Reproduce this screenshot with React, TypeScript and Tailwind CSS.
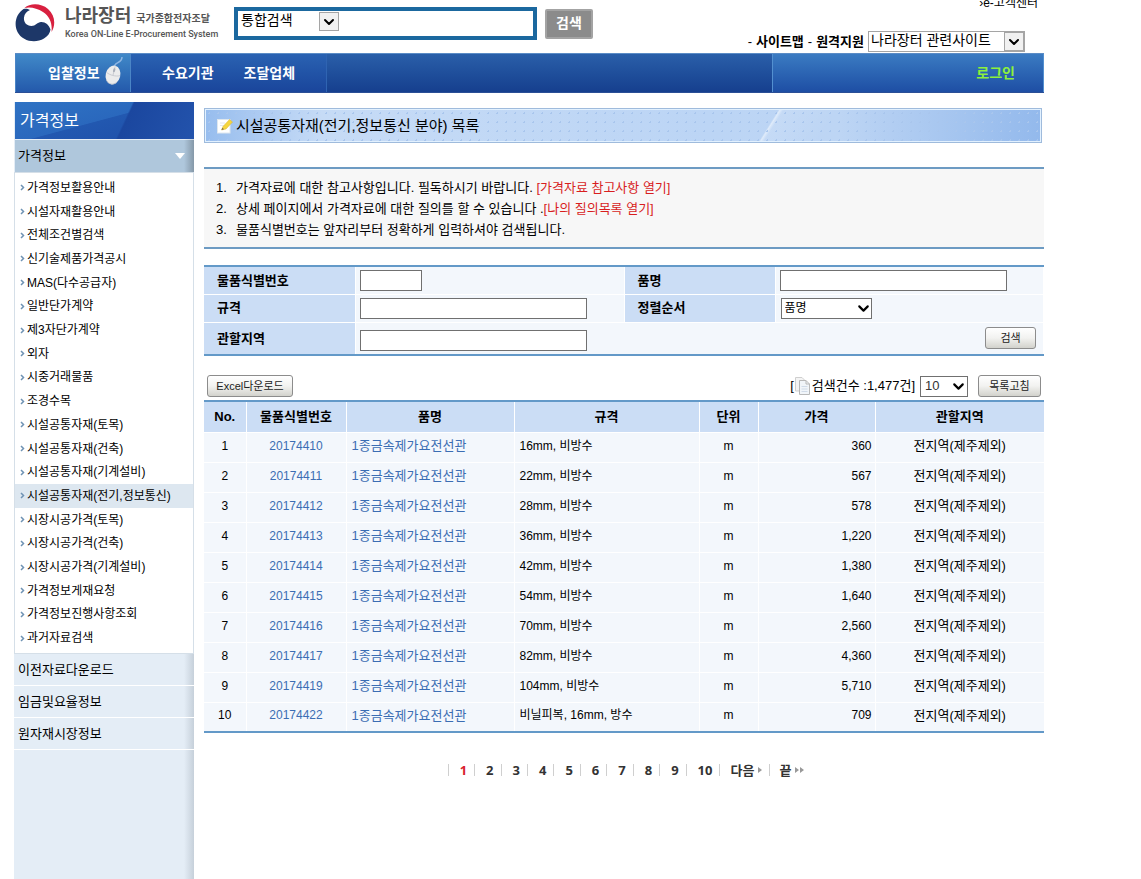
import React from "react";
import { ChevronDown } from "lucide-react";

const sideItems = [
  "가격정보활용안내",
  "시설자재활용안내",
  "전체조건별검색",
  "신기술제품가격공시",
  "MAS(다수공급자)",
  "일반단가계약",
  "제3자단가계약",
  "외자",
  "시중거래물품",
  "조경수목",
  "시설공통자재(토목)",
  "시설공통자재(건축)",
  "시설공통자재(기계설비)",
  "시설공통자재(전기,정보통신)",
  "시장시공가격(토목)",
  "시장시공가격(건축)",
  "시장시공가격(기계설비)",
  "가격정보게재요청",
  "가격정보진행사항조회",
  "과거자료검색",
];

const sideSections = ["이전자료다운로드", "임금및요율정보", "원자재시장정보"];

const rows = [
  ["20174410", "16mm, 비방수", "360"],
  ["20174411", "22mm, 비방수", "567"],
  ["20174412", "28mm, 비방수", "578"],
  ["20174413", "36mm, 비방수", "1,220"],
  ["20174414", "42mm, 비방수", "1,380"],
  ["20174415", "54mm, 비방수", "1,640"],
  ["20174416", "70mm, 비방수", "2,560"],
  ["20174417", "82mm, 비방수", "4,360"],
  ["20174419", "104mm, 비방수", "5,710"],
  ["20174422", "비닐피복, 16mm, 방수", "709"],
];

const pages = ["1", "2", "3", "4", "5", "6", "7", "8", "9", "10"];

function Logo() {
  return (
    <svg viewBox="0 0 40 38" className="h-[38px] w-10 shrink-0" aria-hidden="true">
      <path
        d="M9.5 4C15 -1 26 -1 33 5C40 11 41 21 36.5 28C37.500 20 35 12.500 28 8C22 4 15 2.500 9.500 4Z"
        fill="#d8203f"
      />
      <path
        d="M8.500 5C1 10 -1.500 20 2.500 28C7 37 20 40 29 34.500C33 32 35 29 35.500 25.500C34 21 30.500 17.800 26 18C22.500 18.200 20.500 22 16.500 22C11 22 8.500 18 9 13.500C9.400 10 11.500 7.500 15 6C12.500 4.500 10.500 4.500 8.500 5Z"
        fill="#1d3768"
      />
    </svg>
  );
}

function MouseIcon() {
  return (
    <svg viewBox="0 0 22 30" className="h-[30px] w-[22px]" aria-hidden="true">
      <path d="M12 11C10 6 19 8 19 1" fill="none" stroke="#8fb6e2" strokeWidth="1.500" />
      <g transform="rotate(14 10 19)">
        <ellipse cx="10" cy="19" rx="7.300" ry="9.500" fill="#ececec" />
        <path d="M4 24C7 29 13 29 16 24C15 30 5 30 4 24Z" fill="#b9bec8" />
        <path d="M3 18C7 20 13 20 17 18M10 10V19" fill="none" stroke="#c3c6cd" strokeWidth="0.800" />
        <rect x="9" y="12" width="2" height="4" rx="1" fill="#a9aeb9" />
      </g>
    </svg>
  );
}

function NoteIcon() {
  return (
    <svg viewBox="0 0 16 16" className="size-4 shrink-0" aria-hidden="true">
      <rect x="0.500" y="1.500" width="12.500" height="13.500" fill="#fff" stroke="#dfe7ee" />
      <path d="M3 5H8M3 7.500H7" stroke="#e3e8ee" />
      <path d="M4.500 12L6 8.500L12.500 1.500L15.500 4L9 11Z" fill="#f5d63e" stroke="#d8b030" strokeWidth="0.500" />
      <path d="M4.500 12L5.500 9.800L7 11.300Z" fill="#7a6a4a" />
    </svg>
  );
}

function PagesIcon() {
  return (
    <svg viewBox="0 0 16 18" className="h-[18px] w-4" aria-hidden="true">
      <path d="M0.500 0.500H7L10 3.500V14H0.500Z" fill="#f4f4f4" stroke="#cfcfcf" />
      <path d="M4.500 3.500H11L14.500 7V17.500H4.500Z" fill="#f1f5f9" stroke="#b8b8b8" />
      <path d="M11 3.500V7H14.500" fill="none" stroke="#b8b8b8" />
      <path d="M6.500 9.500H12.500M6.500 12H12.500M6.500 14.500H12.500" stroke="#d0dbe8" />
    </svg>
  );
}

function BoxArrow() {
  return (
    <span className="pointer-events-none absolute top-0 right-0 flex h-[19px] w-5 items-center justify-center border border-[#a5a5a5] bg-[#f1f1f1]">
      <ChevronDown size={16} strokeWidth={3} />
    </span>
  );
}

const smallButton =
  "rounded-[3px] border border-[#8c8c8c] bg-gradient-to-b from-white via-[#f2f2f0] to-[#d2d2cc] text-[11px] leading-[18px] text-[#222]";
const labelCell =
  "border-r border-b border-white bg-[#cbddf5] pl-[13px] text-left text-[13px] font-bold";
const fieldCell = "border-r border-b border-white bg-[#f3f7fc] pl-1";
const textInput = "block h-[21px] border border-[#707070] bg-white px-1 text-[12px]";

export default function App() {
  return (
    <div className="flex min-h-screen flex-col bg-white pl-[14px] font-['Liberation_Sans','Noto_Sans_CJK_KR',sans-serif] text-[13px] text-black">
      <div className="flex w-full max-w-[1030px] flex-1 flex-col">
        <header className="flex h-[53px] items-start pl-px">
          <a href="#" className="flex w-[202px] shrink-0 items-center pt-[4px]">
            <Logo />
            <span className="ml-[10px] flex flex-col text-[#555]">
              <span className="flex items-baseline gap-[5px] leading-[20px]">
                <span className="text-[18px] font-bold">나라장터</span>
                <span className="text-[10px] font-bold whitespace-nowrap">국가종합전자조달</span>
              </span>
              <span className="font-[Roboto,sans-serif] text-[9px] leading-[11px] font-medium whitespace-nowrap">
                Korea ON-Line E-Procurement System
              </span>
            </span>
          </a>
          <form className="ml-[17px] flex items-center pt-[7px]">
            <div className="flex h-[33px] w-[303px] items-start border-4 border-[#1b689f] bg-white pl-px">
              <div className="relative mt-px h-5 w-[100px]">
                <select
                  aria-label="검색 구분"
                  className="block h-5 w-full appearance-none bg-white pb-1 pl-[2px] text-[14px] leading-4"
                >
                  <option>통합검색</option>
                </select>
                <BoxArrow />
              </div>
              <input aria-label="검색어" className="h-[25px] min-w-0 flex-1 px-1 outline-none" />
            </div>
            <button
              type="button"
              className="ml-2 h-[30px] w-12 rounded-[2px] border-2 border-[#a3a3a3] bg-[#8b8b8b] text-[14px] font-bold text-white"
            >
              검색
            </button>
          </form>
          <div className="ml-auto flex h-[52px] flex-col items-end justify-between">
            <div className="flex h-[10px] items-end overflow-hidden pr-[6px]">
              <a href="#" className="text-[12px] leading-[14px] whitespace-nowrap">
                ›e-고객센터
              </a>
            </div>
            <div className="flex items-center pr-[19px] font-bold whitespace-nowrap">
              <span className="mr-1 font-normal">-</span>
              <a href="#">사이트맵</a>
              <span className="mx-1 font-normal">-</span>
              <a href="#">원격지원</a>
              <div className="relative ml-1 h-[21px] w-[157px] border border-[#a5a5a5]">
                <select
                  aria-label="관련사이트"
                  className="block h-full w-full appearance-none bg-white pb-[3px] pl-[2px] text-[14px] leading-4 font-normal"
                >
                  <option>나라장터 관련사이트</option>
                </select>
                <BoxArrow />
              </div>
            </div>
          </div>
        </header>

        <nav className="ml-px flex h-10 border-t border-b border-t-[#5b8cc6] border-b-[#2b4f96] bg-gradient-to-b from-[#2a5fa9] to-[#163f8e] text-[14px] leading-5 font-bold text-white">
          <a
            href="#"
            className="flex w-[116px] items-center border-r border-l border-[#4b85c6] bg-gradient-to-b from-[#4189c8] to-[#2459ab] pl-8 whitespace-nowrap"
          >
            입찰정보
            <span className="-mt-1 ml-[3px]">
              <MouseIcon />
            </span>
          </a>
          <div className="flex w-[196px] items-center border-r border-[#2f64b2] bg-gradient-to-b from-[#2a62b2] to-[#1a459b] pl-[31px]">
            <a href="#">수요기관</a>
            <a href="#" className="ml-[30px]">
              조달업체
            </a>
          </div>
          <div className="ml-auto flex w-[272px] items-center justify-end border-r border-l border-[#5390d0] bg-gradient-to-b from-[#3b7bc2] to-[#1e4ea4] pr-7">
            <a href="#" className="text-[#8df03c]">
              로그인
            </a>
          </div>
        </nav>

        <div className="flex flex-1">
          <aside className="mt-[9px] flex w-[180px] shrink-0 flex-col bg-[#e4edf6] bg-[linear-gradient(to_right,transparent_170px,#c6d0da_180px)]">
            <h2 className="ml-px h-[37px] bg-[linear-gradient(115deg,transparent_60%,#1b479f_61%,#2353ac_100%),linear-gradient(165deg,#2f73c4_0%,#2a68bd_48%,#2258b0_49%,#1e4ea8_100%)] pl-[5px] text-[16px] leading-[37px] text-white">
              가격정보
            </h2>
            <a
              href="#"
              className="mt-px ml-px flex h-8 items-center justify-between bg-[#afc7dc] bg-[linear-gradient(to_right,transparent_169px,#8598a8_179px)] pr-[9px] pl-[3px]"
            >
              가격정보
              <svg viewBox="0 0 10 6" className="h-[6px] w-[10px]" aria-hidden="true">
                <path d="M0 0H10L5 6Z" fill="#fff" />
              </svg>
            </a>
            <ul className="grid min-h-[482px] auto-rows-fr border border-[#d5dfe8] bg-white pt-[3px] pb-[3px]">
              {sideItems.map((item, i) => (
                <li
                  key={item}
                  className={i === 13 ? "flex items-center bg-[#dde7f0]" : "flex items-center"}
                >
                  <a
                    href="#"
                    className="flex items-center gap-[2px] pl-[5px] text-[12px] leading-5 whitespace-nowrap"
                  >
                    <svg viewBox="0 0 5 7" className="h-[7px] w-[5px]" aria-hidden="true">
                      <path d="M1 1L3.500 3.500L1 6" fill="none" stroke="#6f93b4" strokeWidth="1.500" />
                    </svg>
                    {item}
                  </a>
                </li>
              ))}
            </ul>
            {sideSections.map((s) => (
              <a
                key={s}
                href="#"
                className="flex h-8 items-center border-b border-white pl-[4px]"
              >
                {s}
              </a>
            ))}
          </aside>

          <main className="ml-[10px] min-w-0 flex-1">
            <h1 className="mt-[15px] mr-[2px] flex h-[35px] items-center gap-[3px] border border-[#9fbbdc] bg-[#c3d8f4] bg-[radial-gradient(#a9c6ed_1px,transparent_1px),linear-gradient(122deg,transparent_67%,#ffffff88_67.2%,#ffffff22_67.6%,transparent_74%),linear-gradient(to_right,#97bdee_0%,#c6dbf6_14%,#bcd5f5_60%,#bdd5f4_76%,#93b9ec_100%)] bg-[size:9px_9px,100%_100%,100%_100%] pt-px pl-3 text-[15px] shadow-[inset_0_0_0_1px_#e2f1ff]">
              <NoteIcon />
              시설공통자재(전기,정보통신 분야) 목록
            </h1>

            <ol className="mt-6 border-t-2 border-b-2 border-[#6d9bc3] bg-[#f7f7f7] pt-[8px] pb-[7px] pl-3 leading-[21px]">
              <li className="flex">
                <span className="w-5 shrink-0">1.</span>
                <span>
                  가격자료에 대한 참고사항입니다. 필독하시기 바랍니다.{" "}
                  <a href="#" className="text-[#d81e1e]">
                    [가격자료 참고사항 열기]
                  </a>
                </span>
              </li>
              <li className="flex">
                <span className="w-5 shrink-0">2.</span>
                <span>
                  상세 페이지에서 가격자료에 대한 질의를 할 수 있습니다 .
                  <a href="#" className="text-[#d81e1e]">
                    [나의 질의목록 열기]
                  </a>
                </span>
              </li>
              <li className="flex">
                <span className="w-5 shrink-0">3.</span>
                <span>물품식별번호는 앞자리부터 정확하게 입력하셔야 검색됩니다.</span>
              </li>
            </ol>

            <form className="mt-4">
              <table className="w-full table-fixed border-collapse border-t-2 border-b-2 border-[#6399c8]">
                <colgroup>
                  <col className="w-[151px]" />
                  <col className="w-[269px]" />
                  <col className="w-[151px]" />
                  <col />
                </colgroup>
                <tbody>
                  <tr className="h-7">
                    <th className={labelCell}>
                      <label htmlFor="f-id">물품식별번호</label>
                    </th>
                    <td className={fieldCell}>
                      <input id="f-id" className={`${textInput} w-[62px]`} />
                    </td>
                    <th className={labelCell}>
                      <label htmlFor="f-name">품명</label>
                    </th>
                    <td className={fieldCell}>
                      <input id="f-name" className={`${textInput} w-[227px]`} />
                    </td>
                  </tr>
                  <tr className="h-7">
                    <th className={labelCell}>
                      <label htmlFor="f-spec">규격</label>
                    </th>
                    <td className={fieldCell}>
                      <input id="f-spec" className={`${textInput} w-[227px]`} />
                    </td>
                    <th className={labelCell}>
                      <label htmlFor="f-sort">정렬순서</label>
                    </th>
                    <td className={fieldCell}>
                      <div className="relative ml-px w-[91px]">
                        <select
                          id="f-sort"
                          className="block h-[21px] w-full appearance-none border border-[#707070] bg-white pl-[3px] text-[12px] leading-4"
                        >
                          <option>품명</option>
                        </select>
                        <ChevronDown
                          size={17}
                          strokeWidth={3}
                          className="pointer-events-none absolute top-[2px] right-0"
                        />
                      </div>
                    </td>
                  </tr>
                  <tr className="h-[33px]">
                    <th className={labelCell}>
                      <label htmlFor="f-area">관할지역</label>
                    </th>
                    <td colSpan={3} className={fieldCell}>
                      <div className="flex items-center justify-between pr-[7px]">
                        <input id="f-area" className={`${textInput} mt-1 w-[227px]`} />
                        <button type="button" className={`${smallButton} h-[22px] w-[51px]`}>
                          검색
                        </button>
                      </div>
                    </td>
                  </tr>
                </tbody>
              </table>
            </form>

            <div className="mt-4 flex h-[28px] items-center pr-[3px] pl-[3px]">
              <button type="button" className={`${smallButton} h-[22px] w-[86px] whitespace-nowrap`}>
                Excel다운로드
              </button>
              <span className="ml-auto flex items-center whitespace-nowrap">
                [
                <span className="mr-px ml-px">
                  <PagesIcon />
                </span>
                검색건수 :1,477건]
              </span>
              <div className="relative ml-[5px] w-12">
                <select
                  aria-label="페이지당 건수"
                  className="block h-[21px] w-full appearance-none border border-[#707070] bg-white pl-[4px] text-[13px] leading-4 text-[#333]"
                >
                  <option>10</option>
                </select>
                <ChevronDown
                  size={17}
                  strokeWidth={3}
                  className="pointer-events-none absolute top-[2px] right-px"
                />
              </div>
              <button type="button" className={`${smallButton} ml-[10px] h-[22px] w-[63px]`}>
                목록고침
              </button>
            </div>

            <table className="w-full table-fixed border-collapse border-t-2 border-b-2 border-[#6399c8]">
              <colgroup>
                <col className="w-[42px]" />
                <col className="w-[100px]" />
                <col className="w-[168px]" />
                <col className="w-[185px]" />
                <col className="w-[59px]" />
                <col className="w-[117px]" />
                <col />
              </colgroup>
              <thead>
                <tr className="h-[31px] bg-[#cbddf5]">
                  {["No.", "물품식별번호", "품명", "규격", "단위", "가격", "관할지역"].map((h) => (
                    <th
                      key={h}
                      className="border-b border-l border-white font-bold first:border-l-0"
                    >
                      {h}
                    </th>
                  ))}
                </tr>
              </thead>
              <tbody>
                {rows.map(([id, spec, price], i) => (
                  <tr
                    key={id}
                    className="h-[30px] bg-[#f3f7fc] [&>td]:border-b [&>td]:border-l [&>td]:border-white [&>td]:pb-[3px] [&>td:first-child]:border-l-0"
                  >
                    <td className="text-center text-[12px]">{i + 1}</td>
                    <td className="text-center text-[12px]">
                      <a href="#" className="text-[#3b6db3]">
                        {id}
                      </a>
                    </td>
                    <td className="pl-[5px]">
                      <a href="#" className="text-[#3b6db3]">
                        1종금속제가요전선관
                      </a>
                    </td>
                    <td className="pl-[5px] text-[12px]">{spec}</td>
                    <td className="text-center text-[12px]">m</td>
                    <td className="pr-[3px] text-right text-[12px]">{price}</td>
                    <td className="text-center">전지역(제주제외)</td>
                  </tr>
                ))}
              </tbody>
            </table>

            <div className="mt-[29px] flex h-4 items-center justify-center pl-1 font-['Open_Sans','Noto_Sans_CJK_KR',sans-serif] leading-4 font-bold text-[#333]">
              {pages.map((p) => (
                <a
                  key={p}
                  href="#"
                  className={
                    p === "1"
                      ? "flex h-3 items-center border-l border-[#cfcfcf] pr-[7px] pl-[11px] text-[#d9232e]"
                      : "flex h-3 items-center border-l border-[#cfcfcf] pr-[7px] pl-[11px]"
                  }
                >
                  {p}
                </a>
              ))}
              <a
                href="#"
                className="flex h-3 items-center gap-1 border-l border-[#cfcfcf] pr-[7px] pl-[10px]"
              >
                다음
                <svg viewBox="0 0 4 6" className="h-[6px] w-1" aria-hidden="true">
                  <path d="M0 0L4 3L0 6Z" fill="#999" />
                </svg>
              </a>
              <a href="#" className="flex h-3 items-center gap-1 border-l border-[#cfcfcf] pl-[9px]">
                끝
                <svg viewBox="0 0 9 6" className="h-[6px] w-[9px]" aria-hidden="true">
                  <path d="M0 0L4 3L0 6ZM5 0L9 3L5 6Z" fill="#999" />
                </svg>
              </a>
            </div>
          </main>
        </div>
      </div>
    </div>
  );
}
